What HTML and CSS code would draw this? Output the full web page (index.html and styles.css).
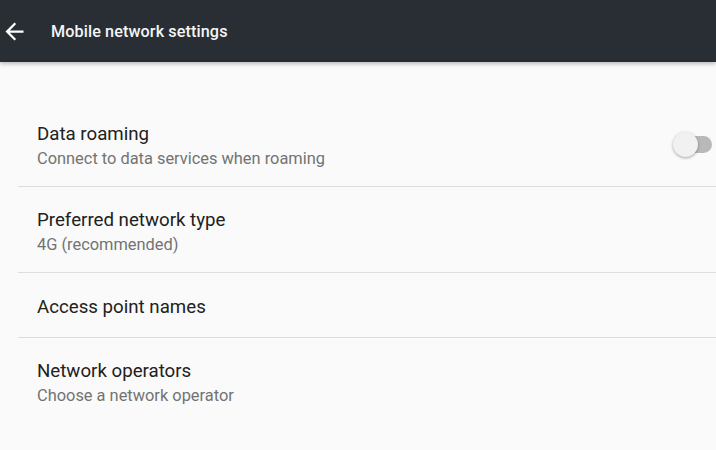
FILE: index.html
```html
<!DOCTYPE html>
<html>
<head>
<meta charset="utf-8">
<link rel="stylesheet" href="styles.css">
</head>
<body>
<header class="appbar">
  <svg class="back" viewBox="0 0 24 24" width="27" height="27"><path fill="#fff" d="M20 11H7.83l5.59-5.59L12 4l-8 8 8 8 1.41-1.41L7.83 13H20v-2z"/></svg>
  <h1 class="appbar-title">Mobile network settings</h1>
</header>
<main class="list">
  <div class="row">
    <div class="text">
      <div class="title">Data roaming</div>
      <div class="summary">Connect to data services when roaming</div>
    </div>
    <div class="switch"><span class="track"></span><span class="thumb"></span></div>
  </div>
  <div class="row">
    <div class="text">
      <div class="title">Preferred network type</div>
      <div class="summary">4G (recommended)</div>
    </div>
  </div>
  <div class="row single">
    <div class="text">
      <div class="title">Access point names</div>
    </div>
  </div>
  <div class="row last">
    <div class="text">
      <div class="title">Network operators</div>
      <div class="summary">Choose a network operator</div>
    </div>
  </div>
</main>
</body>
</html>
```
FILE: styles.css
```css
html, body {
  margin: 0;
  padding: 0;
  background: #fafafa;
  font-family: Roboto, "Noto Sans", "Liberation Sans", sans-serif;
  height: 100%;
  overflow: hidden;
}
.appbar {
  height: 62px;
  background: #282e33;
  display: flex;
  align-items: center;
  box-shadow: 0 2px 4px rgba(0,0,0,0.25);
  position: relative;
  z-index: 1;
}
.back {
  margin-left: 1px;
  flex: none;
}
.appbar-title {
  margin: 0 0 0 23px;
  font-size: 16.2px;
  font-weight: 500;
  color: #f4f5f5;
  letter-spacing: 0.1px;
}
.list {
  padding-top: 39px;
}
.row {
  display: flex;
  align-items: center;
  margin-left: 18px;
  padding: 21px 4px 17px 19px;
  border-bottom: 1px solid #dedede;
}
.row.single {
  padding-top: 22px;
  padding-bottom: 18px;
}
.row.last {
  border-bottom: none;
}
.text {
  flex: 1;
}
.title {
  font-size: 18.7px;
  line-height: 24px;
  color: #212121;
}
.summary {
  margin-top: 2px;
  font-size: 16.4px;
  line-height: 21px;
  color: #737373;
}
.switch {
  position: relative;
  width: 39px;
  height: 25px;
  flex: none;
  margin-top: -3px;
}
.track {
  position: absolute;
  left: 7px;
  right: 0;
  top: 4px;
  height: 17px;
  border-radius: 8.5px;
  background: #b9b9b9;
}
.thumb {
  position: absolute;
  left: 0;
  top: 0;
  width: 25px;
  height: 25px;
  border-radius: 50%;
  background: #f1f1f1;
  box-shadow: 0 1px 3px rgba(0,0,0,0.35);
}
```
